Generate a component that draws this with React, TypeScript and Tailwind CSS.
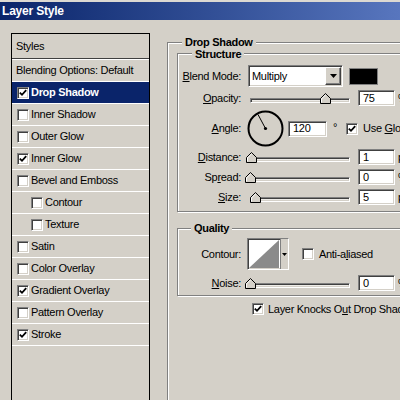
import React from "react";

const sunken =
	"border border-t-[#808080] border-l-[#808080] border-r-white border-b-white shadow-[inset_1px_1px_0_#404040,inset_-1px_-1px_0_#d4d0c8]";
const raised =
	"border border-t-white border-l-white border-r-[#404040] border-b-[#404040] shadow-[inset_-1px_-1px_0_#808080]";
const etched = "border border-[#808080] shadow-[inset_1px_1px_0_#fff,1px_1px_0_#fff]";

const Check: React.FC<{ checked?: boolean; className?: string }> = ({ checked, className = "" }) => (
	<span className={`w-[12px] h-[12px] shrink-0 bg-white flex items-center justify-center ${sunken} ${className}`}>
		{checked && (
			<svg width="8" height="8" viewBox="0 0 8 8">
				<path d="M0.8 3.6 L3 5.8 L7.2 1.2" fill="none" stroke="#000" strokeWidth="1.8" />
			</svg>
		)}
	</span>
);

const Field: React.FC<{ value: string; className?: string; w?: string }> = ({ value, className = "", w = "w-[37px]" }) => (
	<div className={`${w} h-[16px] shrink-0 bg-white flex items-center pl-[4px] leading-none ${sunken} ${className}`}>
		{value}
	</div>
);

const Slider: React.FC<{ value: number }> = ({ value }) => (
	<div className="relative w-[104px] h-[16px] ml-[7px] shrink-0">
		<div className={`absolute left-[2px] right-[2px] top-[8px] h-[5px] bg-[#eeece8] ${sunken}`} />
		<svg
			className="absolute top-[3px]"
			style={{ left: 2 + value - 5 }}
			width="11"
			height="11"
			viewBox="0 0 11 11"
		>
			<polygon points="0.5,10.5 0.5,5.5 5.5,0.5 10.5,5.5 10.5,10.5" fill="#d4d0c8" stroke="#000" />
			<polyline points="1.5,9.5 1.5,5.9 5.5,1.9" fill="none" stroke="#fff" />
		</svg>
	</div>
);

const SliderRow: React.FC<{ label: React.ReactNode; value: number; unit: string; className?: string }> = ({
	label,
	value,
	unit,
	className = "",
}) => (
	<div className={`flex items-center h-[16px] ${className}`}>
		<span className="w-[63px] text-right shrink-0">{label}</span>
		<Slider value={value} />
		<Field value={String(value)} className="ml-[6px]" />
		<span className="ml-[3px]">{unit}</span>
	</div>
);

const styles = [
	{ name: "Drop Shadow", checked: true, selected: true },
	{ name: "Inner Shadow" },
	{ name: "Outer Glow" },
	{ name: "Inner Glow", checked: true },
	{ name: "Bevel and Emboss" },
	{ name: "Contour", indent: true },
	{ name: "Texture", indent: true },
	{ name: "Satin" },
	{ name: "Color Overlay" },
	{ name: "Gradient Overlay", checked: true },
	{ name: "Pattern Overlay" },
	{ name: "Stroke", checked: true },
];

const App: React.FC = () => {
	return (
		<div className="w-[400px] h-[400px] overflow-hidden bg-[#d4d0c8] flex flex-col font-['Liberation_Sans',Arial,sans-serif] text-[11px] tracking-[-0.3px] text-black">
			<div className="h-[2px] shrink-0 bg-[#dcd9d2]" />
			<div className="h-[18px] shrink-0 bg-linear-to-r from-[#0a246a] to-[#5876be] flex items-center pl-[2px] text-white font-bold text-[12px] tracking-[-0.2px]">
				Layer Style
			</div>

			<div className="flex flex-1 min-h-0">
				{/* styles list */}
				<div className="ml-[11px] mt-[13px] w-[139px] h-[400px] shrink-0 border border-black flex flex-col">
					<div className="h-[24px] flex items-center pl-[4px]">Styles</div>
					<div className="h-[1px] bg-[#404040]" />
					<div className="h-[1px] bg-white" />
					<div className="h-[22px] flex items-center pl-[4px] border-b border-white">Blending Options: Default</div>
					{styles.map((s) => (
						<div
							key={s.name}
							className={`h-[22px] flex items-center border-b border-white ${s.indent ? "pl-[19px]" : "pl-[5px]"} ${
								s.selected ? "bg-[#0a246a] text-white font-bold" : ""
							}`}
						>
							<Check checked={s.checked} />
							<span className="ml-[2px]">{s.name}</span>
						</div>
					))}
				</div>

				{/* drop shadow settings */}
				<div className={`relative ml-[17px] mt-[22px] w-[260px] h-[400px] shrink-0 ${etched} pl-[9px] pt-[10px]`}>
					<span className="absolute left-[14px] top-[-7px] px-[3px] bg-[#d4d0c8] font-bold leading-[13px]">
						Drop Shadow
					</span>

					<div className={`relative w-[240px] ${etched} pb-[6px]`}>
						<span className="absolute left-[14px] top-[-6px] px-[3px] bg-[#d4d0c8] font-bold leading-[13px]">
							Structure
						</span>

						<div className="flex items-center h-[22px] mt-[11px]">
							<span className="w-[63px] text-right shrink-0">
								<u>B</u>lend Mode:
							</span>
							<div className={`ml-[7px] w-[95px] h-[22px] bg-white flex items-center justify-between ${sunken}`}>
								<span className="pl-[3px]">Multiply</span>
								<div className={`w-[16px] h-[18px] mr-[1px] bg-[#d4d0c8] flex items-center justify-center ${raised}`}>
									<svg width="7" height="4" viewBox="0 0 7 4">
										<polygon points="0,0 7,0 3.5,4" fill="#000" />
									</svg>
								</div>
							</div>
							<div className="ml-[6px] w-[29px] h-[17px] bg-black border border-[#808080]" />
						</div>

						<SliderRow label={<><u>O</u>pacity:</>} value={75} unit="%" className="mt-[3px]" />

						<div className="flex items-center h-[37px] mt-[4px]">
							<span className="w-[63px] text-right shrink-0">
								<u>A</u>ngle:
							</span>
							<svg className="ml-[6px] shrink-0" width="37" height="37" viewBox="0 0 37 37">
								<circle cx="18.5" cy="18.5" r="17" fill="none" stroke="#000" strokeWidth="2" />
								<line x1="18.5" y1="18.5" x2="11" y2="4.5" stroke="#000" strokeWidth="1" />
								<circle cx="18.5" cy="18.5" r="1.6" fill="#000" />
							</svg>
							<Field value="120" w="w-[39px]" className="ml-[4px]" />
							<span className="ml-[6px] self-start mt-[9px]">°</span>
							<Check checked className="ml-[9px]" />
							<span className="ml-[5px] whitespace-nowrap">
								Use <u>G</u>lobal Light
							</span>
						</div>

						<SliderRow label={<><u>D</u>istance:</>} value={1} unit="px" className="mt-[2px]" />
						<SliderRow label={<>Sp<u>r</u>ead:</>} value={0} unit="%" className="mt-[4px]" />
						<SliderRow label={<><u>S</u>ize:</>} value={5} unit="px" className="mt-[4px]" />
					</div>

					<div className={`relative w-[240px] mt-[16px] ${etched} pb-[4px]`}>
						<span className="absolute left-[13px] top-[-7px] px-[3px] bg-[#d4d0c8] font-bold leading-[13px]">
							Quality
						</span>

						<div className="flex items-center h-[32px] mt-[9px]">
							<span className="w-[63px] text-right shrink-0">Contour:</span>
							<div className={`ml-[6px] w-[42px] h-[32px] shrink-0 flex bg-white ${sunken}`}>
								<svg className="m-[1px]" width="30" height="28" viewBox="0 0 30 28">
									<polygon points="0,28 30,0 30,28" fill="#8a8a8a" />
								</svg>
								<div className="flex-1 border-l border-[#808080] bg-[#d4d0c8] flex items-center justify-center">
									<svg width="5" height="3" viewBox="0 0 5 3">
										<polygon points="0,0 5,0 2.5,3" fill="#000" />
									</svg>
								</div>
							</div>
							<Check className="ml-[13px]" />
							<span className="ml-[5px] whitespace-nowrap">
								Anti-a<u>l</u>iased
							</span>
						</div>

						<SliderRow label={<><u>N</u>oise:</>} value={0} unit="%" className="mt-[5px]" />
					</div>

					<div className="flex items-center h-[12px] mt-[7px] ml-[75px]">
						<Check checked />
						<span className="ml-[4px] whitespace-nowrap">
							Layer Knocks O<u>u</u>t Drop Shadow
						</span>
					</div>
				</div>
			</div>
		</div>
	);
};

export default App;
